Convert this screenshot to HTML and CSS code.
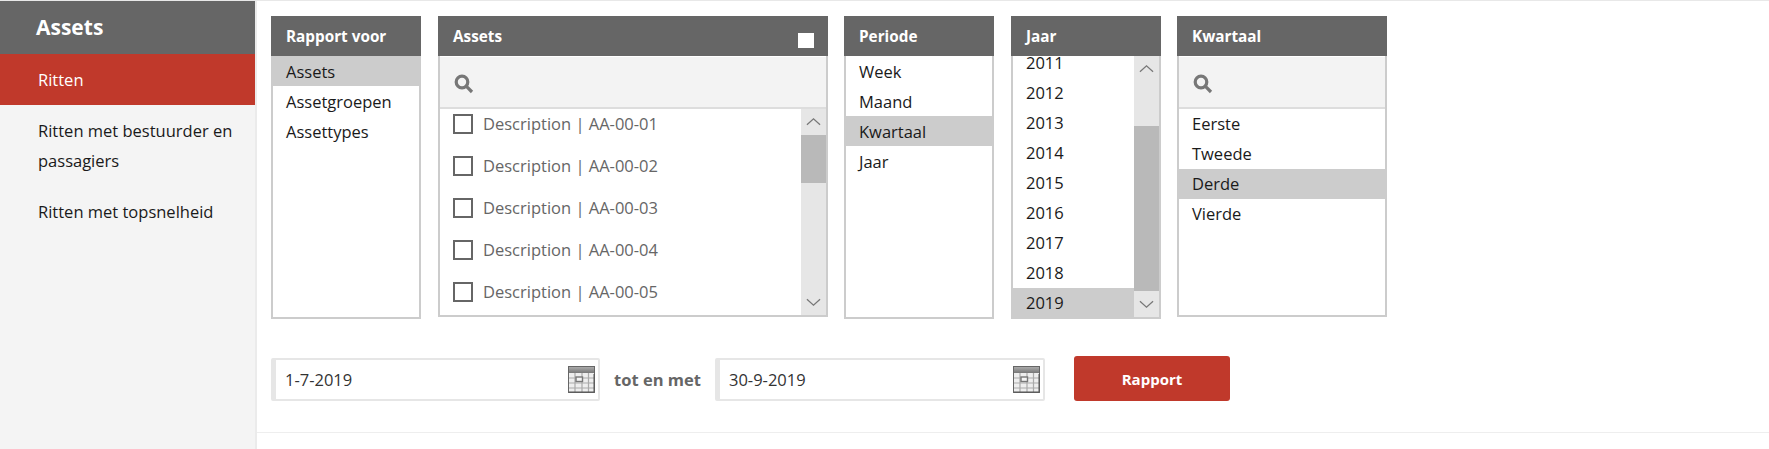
FILE: index.html
```html
<!DOCTYPE html>
<html lang="nl">
<head>
    <meta charset="UTF-8">
    <title>Assets</title>
    <link rel="stylesheet" href="styles.css">
</head>
<body>
    <div class="page">

        <!-- Sidebar -->
        <div class="sidebar">
            <div class="sidebar-title">Assets</div>
            <a class="sidebar-item active" href="#">Ritten</a>
            <a class="sidebar-item" href="#">Ritten met bestuurder en passagiers</a>
            <a class="sidebar-item" href="#">Ritten met topsnelheid</a>
        </div>

        <div class="content">
            <div class="report-form">

                <!-- Selection panels -->
                <div class="panels">
                    <div class="panel panel-report">
                        <div class="panel-header">Rapport voor</div>
                        <div class="panel-body">
                            <ul class="options">
                                <li class="selected">Assets</li>
                                <li>Assetgroepen</li>
                                <li>Assettypes</li>
                            </ul>
                        </div>
                    </div>

                    <div class="panel panel-assets">
                        <div class="panel-header">
                            Assets
                            <span class="select-all"></span>
                        </div>
                        <div class="panel-body">
                            <div class="search">
                                <svg class="search-icon" viewBox="0 0 20 20"><circle cx="8" cy="8" r="5.8"/><path d="M12.2 12.2 L18 18"/></svg>
                            </div>
                            <div class="scroll-area">
                                <ul class="asset-list">
                                    <li><span class="checkbox"></span>Description | AA-00-01</li>
                                    <li><span class="checkbox"></span>Description | AA-00-02</li>
                                    <li><span class="checkbox"></span>Description | AA-00-03</li>
                                    <li><span class="checkbox"></span>Description | AA-00-04</li>
                                    <li><span class="checkbox"></span>Description | AA-00-05</li>
                                </ul>
                                <div class="scrollbar">
                                    <svg class="arrow" viewBox="0 0 16 10"><path d="M1 8 L8 1.5 L15 8"/></svg>
                                    <div class="thumb thumb-assets"></div>
                                    <div class="track"></div>
                                    <svg class="arrow" viewBox="0 0 16 10"><path d="M1 2 L8 8.5 L15 2"/></svg>
                                </div>
                            </div>
                        </div>
                    </div>

                    <div class="panel panel-period">
                        <div class="panel-header">Periode</div>
                        <div class="panel-body">
                            <ul class="options">
                                <li>Week</li>
                                <li>Maand</li>
                                <li class="selected">Kwartaal</li>
                                <li>Jaar</li>
                            </ul>
                        </div>
                    </div>

                    <div class="panel panel-year">
                        <div class="panel-header">Jaar</div>
                        <div class="panel-body">
                            <div class="scroll-area">
                                <ul class="options year-list">
                                    <li>2011</li>
                                    <li>2012</li>
                                    <li>2013</li>
                                    <li>2014</li>
                                    <li>2015</li>
                                    <li>2016</li>
                                    <li>2017</li>
                                    <li>2018</li>
                                    <li class="selected">2019</li>
                                </ul>
                                <div class="scrollbar">
                                    <svg class="arrow" viewBox="0 0 16 10"><path d="M1 8 L8 1.5 L15 8"/></svg>
                                    <div class="track track-year"></div>
                                    <div class="thumb thumb-year"></div>
                                    <svg class="arrow" viewBox="0 0 16 10"><path d="M1 2 L8 8.5 L15 2"/></svg>
                                </div>
                            </div>
                        </div>
                    </div>

                    <div class="panel panel-quarter">
                        <div class="panel-header">Kwartaal</div>
                        <div class="panel-body">
                            <div class="search">
                                <svg class="search-icon" viewBox="0 0 20 20"><circle cx="8" cy="8" r="5.8"/><path d="M12.2 12.2 L18 18"/></svg>
                            </div>
                            <ul class="options quarter-list">
                                <li>Eerste</li>
                                <li>Tweede</li>
                                <li class="selected">Derde</li>
                                <li>Vierde</li>
                            </ul>
                        </div>
                    </div>
                </div>

                <!-- Date range -->
                <div class="date-row">
                    <div class="date-field">
                        <span>1-7-2019</span>
                        <svg class="calendar" viewBox="0 0 27 27">
                            <use href="#calendar-icon"/>
                        </svg>
                    </div>
                    <span class="date-label">tot en met</span>
                    <div class="date-field">
                        <span>30-9-2019</span>
                        <svg class="calendar" viewBox="0 0 27 27">
                            <use href="#calendar-icon"/>
                        </svg>
                    </div>
                    <button class="report-button" type="button">Rapport</button>
                </div>

            </div>
        </div>
    </div>

    <!-- Shared calendar icon -->
    <svg class="icon-defs" width="0" height="0">
        <defs>
            <linearGradient id="calendar-top" x1="0" y1="0" x2="0" y2="1">
                <stop offset="0" stop-color="#aaa"/>
                <stop offset="1" stop-color="#777"/>
            </linearGradient>
            <g id="calendar-icon">
                <rect x="0.5" y="0.5" width="26" height="26" fill="#eee" stroke="#666"/>
                <rect x="1" y="1" width="25" height="6" fill="url(#calendar-top)"/>
                <path d="M1 12H26M1 17H26M1 22H26M7 7V26M14 7V26M20.5 7V26" stroke="#aaa" stroke-width="1.2" fill="none"/>
                <rect x="8" y="11" width="6.5" height="4.5" fill="#f4f4f4" stroke="#777" stroke-width="1.4"/>
                <path d="M1 26H26V8" stroke="#555" stroke-width="1" fill="none"/>
            </g>
        </defs>
    </svg>
</body>
</html>
```

FILE: styles.css
```css
/* Reset */
* {
    margin: 0;
    padding: 0;
    box-sizing: border-box;
}

body {
    font-family: "Open Sans", Arial, sans-serif;
    font-size: 16.5px;
    line-height: 30px;
    color: #1a1a1a;
    background-color: #fff;
    overflow: hidden;
}

ul {
    list-style: none;
}

.page {
    display: flex;
    height: 100vh;
    border-top: 1px solid #e8e8e8;
}

/* Sidebar */
.sidebar {
    width: 257px;
    flex-shrink: 0;
    background-color: #f4f4f4;
    border-right: 2px solid #ebebeb;
}

.sidebar-title {
    height: 53px;
    padding-left: 36px;
    background-color: #666;
    color: #fff;
    font-size: 21px;
    font-weight: bold;
    line-height: 52px;
}

.sidebar-item {
    display: block;
    padding: 10.5px 20px 10.5px 38px;
    color: #1a1a1a;
    text-decoration: none;
}

.sidebar-item.active {
    background-color: #c0392b;
    color: #fff;
}

/* Main content */
.content {
    flex: 1;
}

.report-form {
    height: 432px;
    padding: 15px 0 0 14px;
    border-bottom: 1px solid #eee;
}

.panels {
    display: flex;
    align-items: flex-start;
}

.panel-header {
    display: flex;
    justify-content: space-between;
    height: 40px;
    padding: 0 14px 0 15px;
    background-color: #666;
    color: #fff;
    font-size: 15.3px;
    font-weight: bold;
    line-height: 40px;
}

.panel-body {
    display: flex;
    flex-direction: column;
    border: 2px solid #ccc;
    border-top: none;
    overflow: hidden;
}

.panel-report {
    width: 150px;
    margin-right: 17px;
}

.panel-report .panel-body,
.panel-period .panel-body,
.panel-year .panel-body {
    height: 263px;
}

.panel-assets {
    width: 390px;
    margin-right: 16px;
}

.panel-assets .panel-body,
.panel-quarter .panel-body {
    height: 261px;
}

.panel-period,
.panel-year {
    width: 150px;
    margin-right: 17px;
}

.panel-year {
    margin-right: 16px;
}

.panel-quarter {
    width: 210px;
}

.select-all {
    width: 16px;
    height: 15px;
    margin-top: 17px;
    background-color: #fff;
}

/* Option lists */
.options li {
    height: 30px;
    padding-left: 13px;
    line-height: 32px;
    white-space: nowrap;
}

.options li.selected {
    background-color: #ccc;
}

.quarter-list li {
    line-height: 30px;
}

/* Search box */
.search {
    height: 52px;
    flex-shrink: 0;
    padding: 17px 0 0 14px;
    margin-top: 1px;
    background-color: #f3f3f3;
    border-bottom: 2px solid #ddd;
}

.search-icon {
    display: block;
    width: 20px;
    height: 20px;
    fill: none;
    stroke: #777;
    stroke-width: 3.2;
}

/* Scrollable lists */
.scroll-area {
    display: flex;
    flex: 1;
    min-height: 0;
    overflow: hidden;
}

.asset-list {
    flex: 1;
    margin-top: -6px;
    color: #666;
}

.asset-list li {
    display: flex;
    align-items: center;
    height: 42px;
    padding-left: 13px;
}

.checkbox {
    width: 20px;
    height: 20px;
    margin-right: 10px;
    border: 2px solid #666;
}

.year-list {
    flex: 1;
    margin-top: -8px;
}

.year-list li {
    line-height: 30px;
}

.scrollbar {
    display: flex;
    flex-direction: column;
    flex-shrink: 0;
    width: 25px;
    background-color: #e6e6e6;
}

.arrow {
    display: block;
    flex-shrink: 0;
    width: 100%;
    height: 26px;
    padding: 8px 5px;
    fill: none;
    stroke: #777;
    stroke-width: 1.3;
}

.track {
    flex: 1;
}

.track-year {
    flex: none;
    height: 44px;
}

.thumb {
    background-color: #b9b9b9;
}

.thumb-assets {
    height: 48px;
}

.thumb-year {
    flex: 1;
}

/* Date range row */
.date-row {
    display: flex;
    align-items: flex-end;
    margin-top: 37px;
}

.date-field {
    display: flex;
    align-items: center;
    justify-content: space-between;
    width: 330px;
    height: 43px;
    padding: 0 3px 0 9px;
    border: 2px solid #e6e6e6;
    border-left-width: 5px;
    border-radius: 2px;
    color: #333;
}

.date-field:first-child {
    width: 329px;
}

.calendar {
    display: block;
    width: 27px;
    height: 27px;
}

.date-label {
    width: 115px;
    height: 43px;
    color: #666;
    font-weight: bold;
    line-height: 43px;
    text-align: center;
}

.report-button {
    width: 156px;
    height: 45px;
    margin-left: 29px;
    border: none;
    border-radius: 3px;
    background-color: #c0392b;
    color: #fff;
    font-family: inherit;
    font-size: 15px;
    font-weight: bold;
}

.icon-defs {
    position: absolute;
}
```
